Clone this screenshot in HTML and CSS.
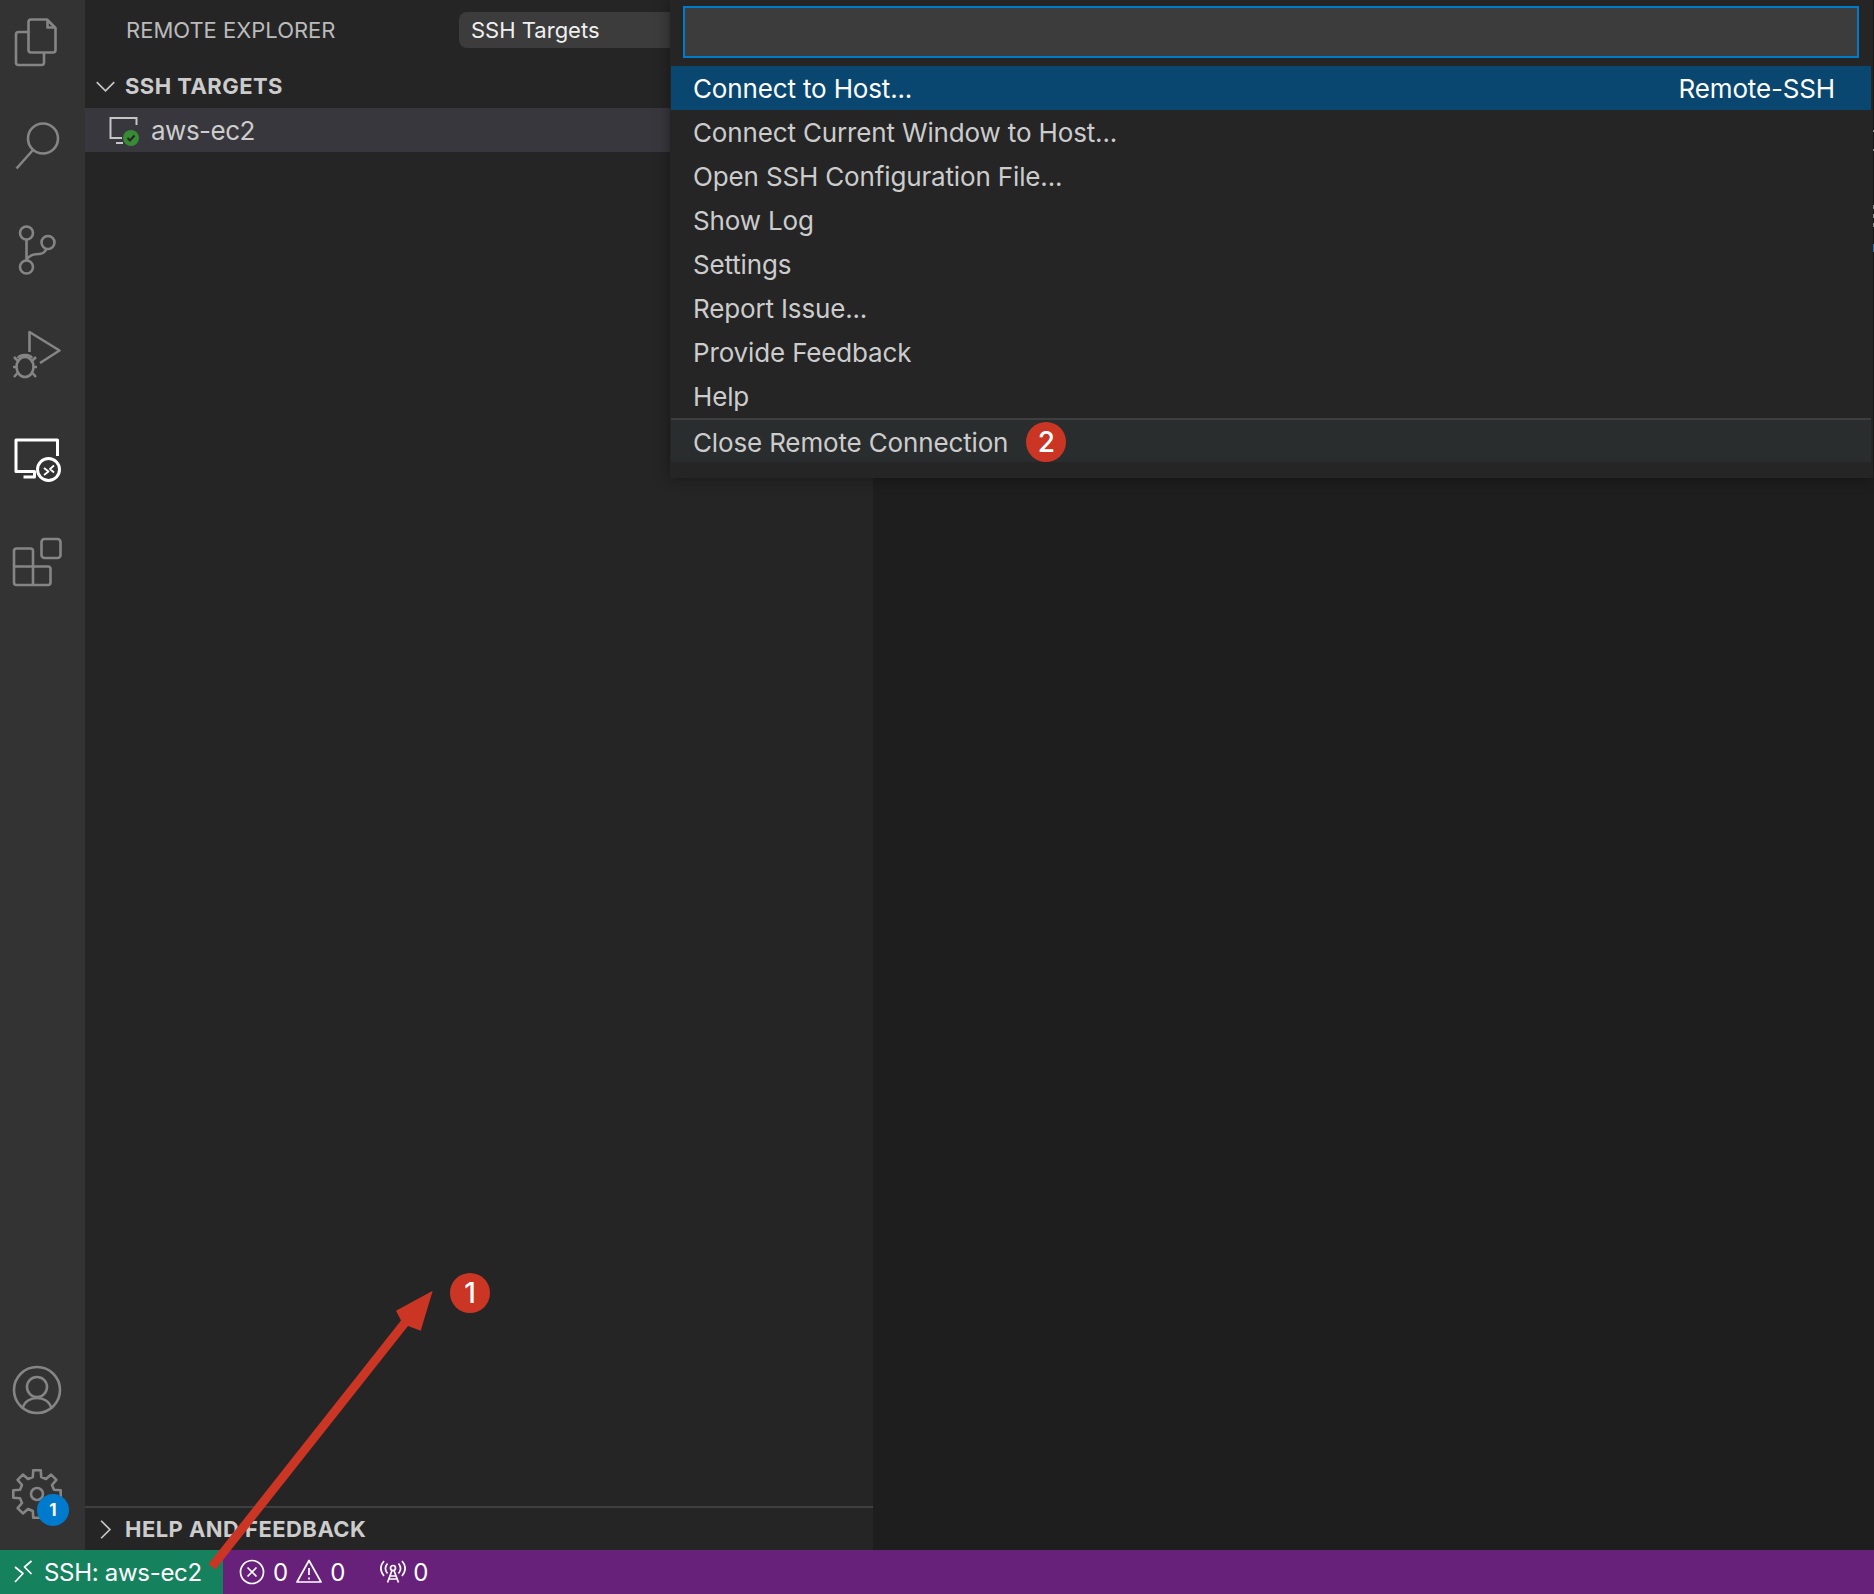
FILE: index.html
```html
<!DOCTYPE html>
<html lang="en">
<head>
    <meta charset="UTF-8">
    <title>Remote Explorer</title>
    <link rel="stylesheet" href="styles.css">
</head>
<body>

    <div class="workbench">
        <div class="activity-bar">
            <div class="activity-list">
                <svg class="icon" viewBox="7 12 60 60"><path d="M31 19.5H47L55.5 28V50A2.5 2.5 0 0 1 53 52.5H31A2.5 2.5 0 0 1 28.5 50V22A2.5 2.5 0 0 1 31 19.5ZM47.5 20V27.5H55M28 32H18.5A2.5 2.5 0 0 0 16 34.5V62.5A2.5 2.5 0 0 0 18.5 65H41.5A2.5 2.5 0 0 0 44 62.5V53"/></svg>
                <svg class="icon" viewBox="7 116 60 60"><circle cx="43" cy="138.5" r="15"/><path d="M33 150L16.5 168.5"/></svg>
                <svg class="icon" viewBox="7 220 60 60"><circle cx="26.500" cy="233" r="6.500"/><circle cx="48" cy="242.500" r="6.500"/><circle cx="26.500" cy="267" r="6.500"/><path d="M26.500 239.500V260.500M27 259C30 255 35 254 39 254C43 254 45 252 46.500 249"/></svg>
                <svg class="icon" viewBox="7 324 60 60"><path d="M29.500 352V332L59.500 350.500L40 363"/><ellipse cx="25" cy="367" rx="8.500" ry="10"/><path d="M18 358C20 354 30 354 32 358M14 357L18 361M36 357L32 361M13 367H17M37 367H33M14 377L18 372.500M36 377L32 372.500"/></svg>
                <svg class="icon icon-active" viewBox="7 428 60 60"><path d="M57.500 456V440H16V471.500H34.500V477H23.500"/><circle cx="48.500" cy="469.500" r="11"/><path class="thin" d="M44 468L48.500 471.500L44 475M54 465.500L50 469L54 472.500"/></svg>
                <svg class="icon" viewBox="7 532 60 60"><rect x="41.500" y="539" width="19" height="19" rx="3"/><path d="M16.500 548.500H30.500A2.500 2.500 0 0 1 33 551V566.500H48A2.500 2.500 0 0 1 50.500 569V582.500A2.500 2.500 0 0 1 48 585H16.500A2.500 2.500 0 0 1 14 582.500V551A2.500 2.500 0 0 1 16.500 548.500ZM14 566.500H33V585"/></svg>
            </div>
            <div class="activity-list">
                <svg class="icon" viewBox="7 1360 60 60"><circle cx="37" cy="1390" r="23"/><circle cx="37" cy="1387" r="10"/><path d="M22.500 1409C24 1401 31 1398 37 1398C43 1398 50 1401 51.500 1409"/></svg>
                <div class="gear">
                    <svg class="icon" viewBox="-30 -30 60 60"><path d="M-4.200 -17L-3.750 -23.700L3.750 -23.700L4.200 -17L9 -15L14.100 -19.400L19.400 -14.100L15 -9L17 -4.200L23.700 -3.750L23.700 3.750L17 4.200L15 9L19.400 14.100L14.100 19.400L9 15L4.200 17L3.750 23.700L-3.750 23.700L-4.200 17L-9 15L-14.100 19.400L-19.400 14.100L-15 9L-17 4.200L-23.700 3.750L-23.700 -3.750L-17 -4.200L-15 -9L-19.400 -14.100L-14.100 -19.400L-9 -15Z"/><circle cx="0" cy="0" r="6"/></svg>
                    <span class="gear-badge">1</span>
                </div>
            </div>
        </div>

        <div class="sidebar">
            <div class="sidebar-header">
                <span class="sidebar-title">REMOTE EXPLORER</span>
                <div class="target-select">SSH Targets</div>
            </div>
            <div class="section-header">
                <svg class="chevron" viewBox="0 0 24 24"><path d="M2 7L12 17L22 7"/></svg>
                <span>SSH TARGETS</span>
            </div>
            <div class="tree-row">
                <svg class="host-icon" viewBox="0 0 32 32">
                    <path class="host-line" d="M27.500 11V4H1.500V24H13M7 29H14"/>
                    <circle class="host-ok" cx="22" cy="24" r="8"/>
                    <path class="host-check" d="M18.500 24L21 26.500L25.500 21.500"/>
                </svg>
                <span>aws-ec2</span>
            </div>
            <div class="section-footer">
                <svg class="chevron" viewBox="0 0 24 24"><path d="M7 2L17 12L7 22"/></svg>
                <span>HELP AND FEEDBACK</span>
            </div>
        </div>

        <div class="editor"></div>
    </div>

    <div class="status-bar">
        <div class="status-remote">
            <svg class="status-icon" viewBox="0 0 26 26"><path d="M1 8L9 14.500L1 23M17.500 2L10.500 8L17.500 15"/></svg>
            <span class="status-host">SSH: aws-ec2</span>
        </div>
        <div class="status-item status-problems">
            <svg class="status-icon" viewBox="0 0 26 26"><circle cx="13" cy="13" r="11.500"/><path d="M8.500 8.500L17.500 17.500M17.500 8.500L8.500 17.500"/></svg>
            <span>0</span>
            <svg class="status-icon" viewBox="0 0 26 26"><path d="M13 1.500L25 23H1ZM13 9V16M13 18.500V20.500"/></svg>
            <span>0</span>
        </div>
        <div class="status-item status-ports">
            <svg class="status-icon" viewBox="0 0 26 26"><circle cx="13" cy="9" r="2.500"/><path d="M12 11.500L7.500 23.500M14 11.500L18.500 23.500M10 17H16M9 20H17M7.500 4.500C5 7.500 5 11.500 7.500 14.500M18.500 4.500C21 7.500 21 11.500 18.500 14.500M4 2C0 6.500 0 12 4 17M22 2C26 6.500 26 12 22 17"/></svg>
            <span>0</span>
        </div>
    </div>

    <div class="quick-pick">
        <div class="quick-input"></div>
        <div class="pick-list">
            <div class="pick-row pick-selected"><span>Connect to Host...</span><span>Remote-SSH</span></div>
            <div class="pick-row">Connect Current Window to Host...</div>
            <div class="pick-row">Open SSH Configuration File...</div>
            <div class="pick-row">Show Log</div>
            <div class="pick-row">Settings</div>
            <div class="pick-row">Report Issue...</div>
            <div class="pick-row">Provide Feedback</div>
            <div class="pick-row">Help</div>
            <div class="pick-row pick-close"><span>Close Remote Connection</span><span class="step step-inline">2</span></div>
        </div>
    </div>

    <!-- bits of the scrollbar that show past the edge of the quick pick -->
    <div class="edge-marks">
        <span class="mark mark-small"></span>
        <span class="mark mark-small"></span>
        <span class="mark"></span>
        <span class="mark"></span>
        <span class="mark"></span>
        <span class="mark mark-blue"></span>
    </div>

    <!-- annotation drawn on top of the screenshot -->
    <svg class="arrow" viewBox="0 0 1874 1594"><path d="M208.500 1564L215.500 1569.500L408 1326L420.700 1330.700L432.700 1290.700L396 1310.700L401 1320.500Z"/></svg>
    <span class="step step-float">1</span>

</body>
</html>
```
FILE: styles.css
```css
* {
    box-sizing: border-box;
}
body {
    font-family: Inter, "Noto Sans", sans-serif;
    font-size: 26px;
    margin: 0;
    width: 1874px;
    height: 1594px;
    overflow: hidden;
    position: relative;
    display: flex;
    flex-direction: column;
    background-color: #1e1e1e;
    color: #ccc;
}
svg {
    display: block;
    flex-shrink: 0;
}
.workbench {
    flex: 1;
    display: flex;
    min-height: 0;
}

/* activity bar */
.activity-bar {
    width: 85px;
    background-color: #333;
    display: flex;
    flex-direction: column;
    justify-content: space-between;
    padding: 12px 0 26px 7px;
}
.activity-list {
    display: flex;
    flex-direction: column;
    gap: 44px;
}
.icon {
    width: 60px;
    height: 60px;
    fill: none;
    stroke: #858585;
    stroke-width: 2.6;
    stroke-linejoin: round;
}
.icon-active {
    stroke: #fff;
    stroke-width: 3;
}
.icon-active .thin {
    stroke-width: 1.8;
}
.gear {
    position: relative;
}
.gear-badge {
    position: absolute;
    left: 30px;
    top: 30px;
    width: 32px;
    height: 32px;
    border-radius: 50%;
    background-color: #007acc;
    color: #fff;
    font-size: 17px;
    font-weight: 700;
    display: flex;
    align-items: center;
    justify-content: center;
}

/* sidebar */
.sidebar {
    width: 788px;
    background-color: #252526;
    display: flex;
    flex-direction: column;
}
.sidebar-header {
    height: 64px;
    padding: 0 0 4px 41px;
    display: flex;
    align-items: center;
    font-size: 22px;
}
.sidebar-title {
    width: 333px;
    color: #bbb;
    flex-shrink: 0;
}
.target-select {
    width: 260px;
    height: 36px;
    padding-left: 12px;
    border-radius: 8px;
    background-color: #3c3c3c;
    color: #f0f0f0;
    display: flex;
    align-items: center;
}
.section-header, .section-footer {
    display: flex;
    align-items: center;
    height: 44px;
    font-size: 22px;
    font-weight: 700;
    letter-spacing: 0.45px;
    color: #ccc;
    padding-left: 10px;
    gap: 9px;
}
.section-footer {
    margin-top: auto;
    border-top: 2px solid #3f3f40;
}
.chevron {
    width: 21px;
    height: 21px;
    fill: none;
    stroke: #c5c5c5;
    stroke-width: 2;
}
.tree-row {
    height: 44px;
    background-color: #37373d;
    padding-left: 24px;
    letter-spacing: -0.5px;
    display: flex;
    align-items: center;
    gap: 10px;
}
.host-icon {
    width: 32px;
    height: 32px;
}
.host-line {
    fill: none;
    stroke: #c5c5c5;
    stroke-width: 2;
}
.host-ok {
    fill: #388a34;
}
.host-check {
    fill: none;
    stroke: #252526;
    stroke-width: 2;
}
.editor {
    flex: 1;
    background-color: #1e1e1e;
}

/* status bar */
.status-bar {
    height: 44px;
    flex-shrink: 0;
    background-color: #68217a;
    color: #fff;
    font-size: 24px;
    display: flex;
    align-items: center;
}
.status-remote {
    width: 223px;
    height: 100%;
    background-color: #16825d;
    padding-left: 14px;
    display: flex;
    align-items: center;
    gap: 4px;
}
.status-host {
    letter-spacing: -0.3px;
}
.status-item {
    display: flex;
    align-items: center;
}
.status-problems {
    margin-left: 16px;
    gap: 8px;
}
.status-ports {
    margin-left: 35px;
    gap: 7px;
}
.status-icon {
    width: 26px;
    height: 26px;
    fill: none;
    stroke: #fff;
    stroke-width: 1.7;
    stroke-linejoin: round;
}

/* quick pick over the top */
.quick-pick {
    position: absolute;
    left: 670px;
    top: 0;
    width: 1203px;
    height: 478px;
    padding: 6px 2px 0 1px;
    background-color: #252526;
    box-shadow: 0 0 14px rgba(0, 0, 0, 0.4);
}
.quick-input {
    height: 52px;
    margin: 0 12px 8px 12px;
    border: 2px solid #007acc;
    background-color: #3c3c3c;
}
.pick-row {
    height: 44px;
    padding: 0 36px 0 22px;
    letter-spacing: -0.15px;
    display: flex;
    align-items: center;
    justify-content: space-between;
    white-space: nowrap;
}
.pick-selected {
    background-color: #094771;
    color: #fff;
}
.pick-close {
    border-top: 2px solid #3f3f40;
    padding-top: 2px;
    background-color: #2a2d2e;
    justify-content: flex-start;
}
.edge-marks {
    position: absolute;
    left: 1873px;
    top: 128px;
    width: 1px;
    height: 130px;
}
.mark {
    position: absolute;
    width: 1px;
    height: 4px;
    background-color: #8a8a8a;
}
.mark:nth-child(1) { top: 2px; }
.mark:nth-child(2) { top: 21px; }
.mark:nth-child(3) { top: 77px; }
.mark:nth-child(4) { top: 86px; }
.mark:nth-child(5) { top: 95px; }
.mark:nth-child(6) { top: 116px; }
.mark-small {
    height: 2px;
}
.mark-blue {
    height: 8px;
    background-color: #2f74c0;
}

/* red numbered markers */
.step {
    width: 40px;
    height: 40px;
    border-radius: 50%;
    background-color: #cb3524;
    color: #fff;
    font-size: 28px;
    font-weight: 500;
    display: flex;
    align-items: center;
    justify-content: center;
}
.step-inline {
    margin-left: 18px;
}
.step-float {
    position: absolute;
    left: 450px;
    top: 1273px;
}
.arrow {
    position: absolute;
    left: 0;
    top: 0;
    width: 1874px;
    height: 1594px;
    fill: #cb3524;
    pointer-events: none;
}
```
